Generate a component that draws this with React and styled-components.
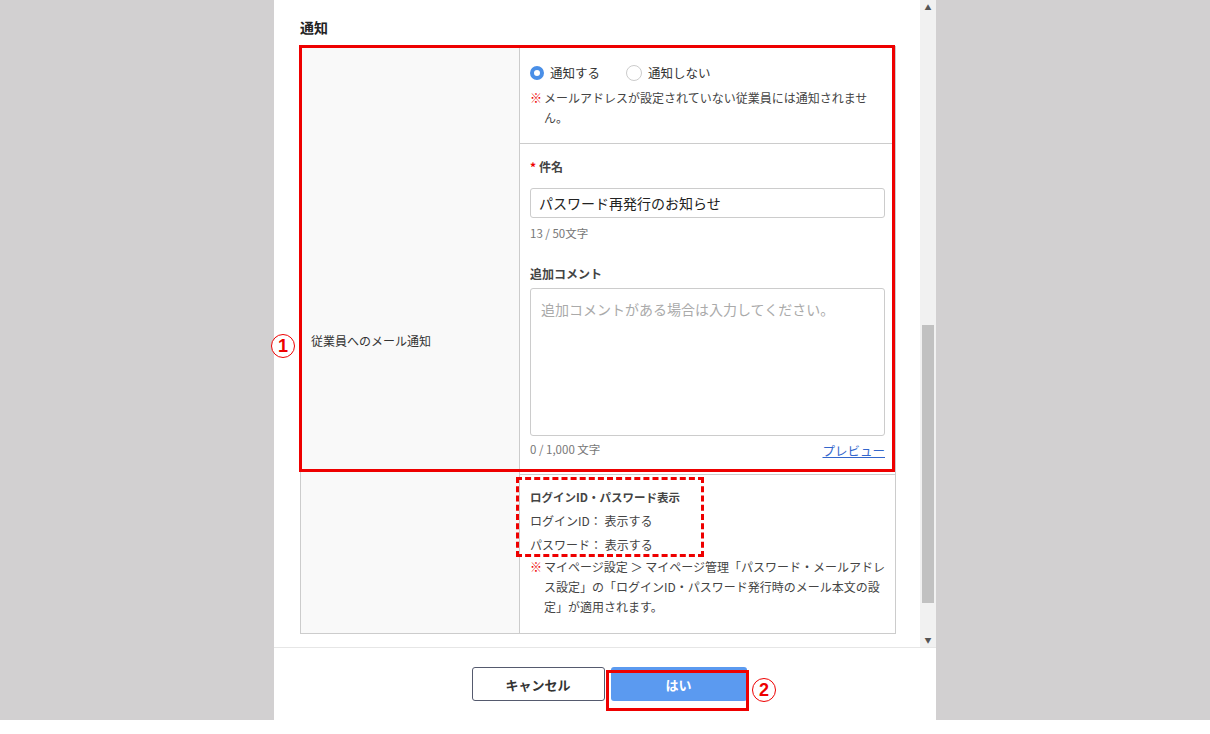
import React from "react";
import styled, { createGlobalStyle } from "styled-components";

const G = createGlobalStyle`
  html,body{margin:0;padding:0;background:#fff;}
  body{font-family:"Noto Sans CJK JP","Noto Sans",sans-serif;color:#333;}
`;
const Page = styled.div`width:1210px;height:734px;display:flex;justify-content:center;background:linear-gradient(#d2d0d1 0 720px,#fff 720px);`;
const Modal = styled.div`width:662px;height:720px;background:#fff;display:flex;flex-direction:column;position:relative;`;
const Body = styled.div`height:647px;display:flex;border-bottom:1px solid #e6e6e6;`;
const Content = styled.div`flex:1;padding:14px 26px 0 26px;overflow:hidden;`;
const Title = styled.div`font-size:14px;font-weight:700;color:#222;height:32px;line-height:26px;`;
const Table = styled.div`width:596px;border:1px solid #ccc;display:grid;grid-template-columns:219px 1fr;box-sizing:border-box;`;
const Label = styled.div`grid-row:1 / span 2;background:#f9f9f9;border-right:1px solid #ccc;font-size:12px;display:flex;align-items:center;padding-left:10px;`;
const Cell = styled.div`grid-column:2;display:flex;flex-direction:column;border-top:${p=>p.$t?"1px solid #ccc":"none"};`;
const Sec = styled.div`padding:${p=>p.$p};border-bottom:${p=>p.$b?"1px solid #ccc":"none"};font-size:12px;`;
const Radios = styled.div`display:flex;gap:26px;align-items:center;font-size:12.5px;`;
const Radio = styled.span`display:flex;align-items:center;gap:6px;&::before{content:"";width:${p=>p.$on?"6px":"14px"};height:${p=>p.$on?"6px":"14px"};border-radius:50%;box-sizing:content-box;border:${p=>p.$on?"4px solid #4a8fe7":"1px solid #ccc"};}`;
const Note = styled.div`display:flex;line-height:20px;margin-top:${p=>p.$m||0}px;color:#444;&>b{color:#e00;font-weight:400;flex:none;width:14px;}`;
const FieldLabel = styled.div`font-size:12px;font-weight:700;color:#444;&>i{color:#e00;font-style:normal;margin-right:3px;}`;
const Input = styled.div`height:30px;border:1px solid #ccc;border-radius:3px;margin-top:13px;padding-left:8px;display:flex;align-items:center;font-size:14px;color:#222;box-sizing:border-box;`;
const Count = styled.div`font-size:11.5px;color:#777;margin-top:7px;display:flex;justify-content:space-between;`;
const Area = styled.div`height:148px;border:1px solid #ccc;border-radius:3px;margin-top:6px;padding:10px;box-sizing:border-box;color:#aaa;font-size:14px;`;
const Link = styled.span`color:#3366cc;text-decoration:underline;font-size:12.5px;`;
const Info = styled.div`font-size:12px;line-height:24px;color:#444;`;
const Scroll = styled.div`width:16px;background:#f1f1f1;display:flex;flex-direction:column;align-items:center;font-size:7px;color:#555;`;
const Thumb = styled.div`width:12px;height:278px;background:#c1c1c1;margin-top:auto;margin-bottom:32px;`;
const Footer = styled.div`flex:1;display:flex;justify-content:center;align-items:center;gap:6px;padding-left:8px;`;
const Btn = styled.div`width:${p=>p.$w}px;height:34px;border-radius:3px;display:flex;align-items:center;justify-content:center;font-weight:700;font-size:13px;box-sizing:border-box;${p=>p.$pri?"background:#5b9af0;color:#fff;":"border:1px solid #555a6e;color:#333;"}`;
const RedBox = styled.div`position:absolute;box-sizing:border-box;border:${p=>p.$d?"3px dashed #e00":"3px solid #e00"};pointer-events:none;`;
const Num = styled.div`position:absolute;width:22px;height:22px;border:1px solid #e00;border-radius:50%;color:#e00;font:700 18px/22px "Liberation Sans",sans-serif;text-align:center;background:#fff;`;

export default function App(){
  return <Page><G/><Modal>
    <Body>
      <Content>
        <Title>通知</Title>
        <Table>
          <Label>従業員へのメール通知</Label>
          <Cell>
            <Sec $b $p="16px 10px 15px">
              <Radios><Radio $on>通知する</Radio><Radio>通知しない</Radio></Radios>
              <Note $m={6}><b>※</b>メールアドレスが設定されていない従業員には通知されません。</Note>
            </Sec>
            <Sec $p="14px 10px 14px">
              <FieldLabel><i>*</i>件名</FieldLabel>
              <Input>パスワード再発行のお知らせ</Input>
              <Count>13 / 50文字</Count>
              <FieldLabel style={{marginTop:24}}>追加コメント</FieldLabel>
              <Area>追加コメントがある場合は入力してください。</Area>
              <Count style={{marginTop:5}}><span>0 / 1,000 文字</span><Link>プレビュー</Link></Count>
            </Sec>
          </Cell>
          <Cell $t>
            <Sec $p="10px 10px 16px">
              <Info style={{fontSize:11.5,fontWeight:700}}>ログインID・パスワード表示</Info>
              <Info>ログインID： 表示する</Info>
              <Info>パスワード： 表示する</Info>
              <Note><b>※</b>マイページ設定 ＞ マイページ管理「パスワード・メールアドレス設定」の「ログインID・パスワード発行時のメール本文の設定」が適用されます。</Note>
            </Sec>
          </Cell>
        </Table>
      </Content>
      <Scroll><span style={{marginTop:2}}>▲</span><Thumb/><span style={{marginBottom:2}}>▼</span></Scroll>
    </Body>
    <Footer><Btn $w={133}>キャンセル</Btn><Btn $pri $w={136}>はい</Btn></Footer>
    <RedBox style={{left:25,top:45,width:596,height:427}}/>
    <RedBox $d style={{left:242,top:477,width:188,height:80}}/>
    <RedBox style={{left:332,top:670,width:143,height:41}}/>
    <Num style={{left:-3,top:334}}>1</Num>
    <Num style={{left:478,top:678}}>2</Num>
  </Modal></Page>;
}
